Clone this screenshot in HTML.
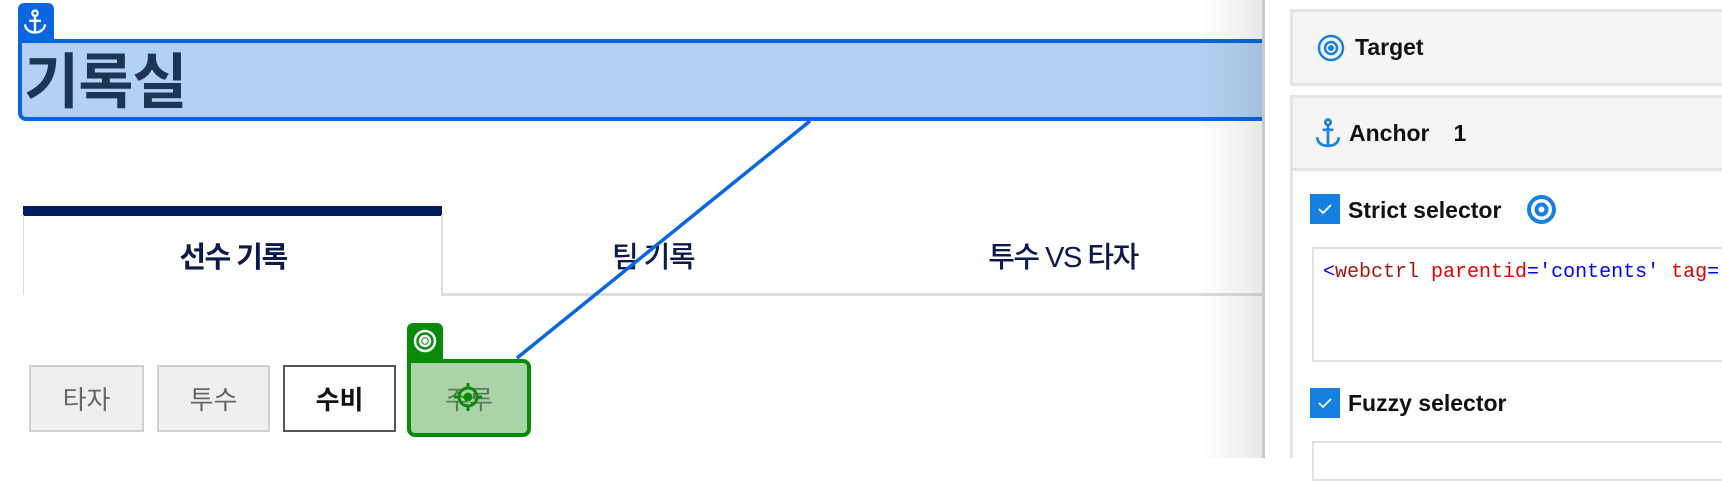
<!DOCTYPE html>
<html><head><meta charset="utf-8"><style>
*{margin:0;padding:0;box-sizing:border-box}
body{width:1722px;height:458px;overflow:hidden;background:#fff;position:relative;font-family:"Liberation Sans","Noto Sans CJK KR",sans-serif}
.a{position:absolute}
.btn{position:absolute;top:365px;height:67px;border:2px solid #d0d0d0;background:#efefef;color:#666;font-size:26px;display:flex;align-items:center;justify-content:center}
.tab{position:absolute;top:215px;height:79px;display:flex;align-items:center;justify-content:center;font-size:29px;font-weight:bold;color:#0a1a4a;letter-spacing:-1.5px}
.hdr{position:absolute;left:1290px;width:440px;background:#f4f5f4;border:3px solid #e4e5e4;border-right:none;display:flex;align-items:center;font-size:23px;font-weight:bold;color:#111}
.cb{position:absolute;left:1310px;width:30px;height:30px;background:#1580e0}
</style></head><body>
<div class="a" style="left:18px;top:3px;width:36px;height:40px;background:#0a66e0;border-radius:6px 6px 0 0"></div>
<svg class="a" style="left:21px;top:8px" width="28" height="28" viewBox="0 0 24 24" fill="none" stroke="#fff" stroke-width="2"><circle cx="12" cy="4.5" r="2.3"/><path d="M12 7v14M7 11h10M3.5 14c0 4 4 7 8.5 7s8.5-3 8.5-7"/></svg>
<div class="a" style="left:18px;top:39px;width:1300px;height:82px;background:#b3d1f3;border:4px solid #0a66e0;border-radius:0 0 0 8px"></div>
<div class="a" style="left:24px;top:42px;font-size:60px;font-weight:bold;color:#1c3557;letter-spacing:-1px;line-height:82px">기록실</div>
<div class="a" style="left:23px;top:206px;width:419px;height:10px;background:#001e60"></div>
<div class="a" style="left:23px;top:215px;width:1px;height:80px;background:#ddd"></div>
<div class="a" style="left:441px;top:215px;width:2px;height:80px;background:#ddd"></div>
<div class="a" style="left:441px;top:293px;width:850px;height:3px;background:#ddd"></div>
<div class="tab" style="left:24px;width:418px">선수 기록</div>
<div class="tab" style="left:443px;width:420px;font-weight:500">팀 기록</div>
<div class="tab" style="left:863px;width:400px;font-weight:500">투수 VS 타자</div>
<div class="btn" style="left:29px;width:115px">타자</div>
<div class="btn" style="left:157px;width:113px">투수</div>
<div class="btn" style="left:283px;width:113px;background:#fff;border-color:#555;color:#111;font-weight:bold">수비</div>
<div class="a" style="left:407px;top:323px;width:36px;height:40px;background:#0a8a0a;border-radius:6px 6px 0 0"></div>
<svg class="a" style="left:412px;top:328px" width="26" height="26" viewBox="0 0 26 26" fill="none" stroke="#fff" stroke-width="2.5"><circle cx="13" cy="13" r="10"/><circle cx="13" cy="13" r="5"/><circle cx="13" cy="13" r="1.5" fill="#fff"/></svg>
<div class="a" style="left:407px;top:359px;width:124px;height:78px;background:#aad3a8;border:4px solid #0a8a0a;border-radius:0 8px 8px 8px;display:flex;align-items:center;justify-content:center;font-size:26px;color:#5a7a5a">주루</div>
<svg class="a" style="left:452px;top:381px" width="32" height="32" viewBox="0 0 32 32" fill="none" stroke="#0a8a0a" stroke-width="3"><circle cx="16" cy="16" r="9"/><circle cx="16" cy="16" r="3" fill="#0a8a0a"/><path d="M16 2v6M16 24v6M2 16h6M24 16h6"/></svg>
<svg class="a" style="left:0;top:0" width="1300" height="458"><line x1="810" y1="121" x2="517" y2="358" stroke="#0a66e0" stroke-width="3.5"/></svg>
<div class="a" style="left:1200px;top:0;width:65px;height:458px;background:linear-gradient(to right,rgba(0,0,0,0),rgba(0,0,0,.09))"></div>
<div class="a" style="left:1262px;top:0;width:460px;height:458px;background:#fff;border-left:3px solid #c9c9cc"></div>
<div class="hdr" style="top:9px;height:77px;padding-left:24px"><svg width="28" height="28" viewBox="0 0 28 28" fill="none" stroke="#1a80e0" stroke-width="2.5"><circle cx="14" cy="14" r="12"/><circle cx="14" cy="14" r="6"/><circle cx="14" cy="14" r="1.8" fill="#1a80e0"/></svg><span style="margin-left:10px">Target</span></div>
<div class="hdr" style="top:95px;height:76px;padding-left:22px"><svg width="26" height="30" viewBox="0 0 24 28" fill="none" stroke="#1a80e0" stroke-width="2.5"><circle cx="12" cy="4" r="2.5"/><path d="M12 7v19M7 11h10M2 18c0 5 4 8 10 8s10-3 10-8"/></svg><span style="margin-left:8px">Anchor</span><span style="margin-left:24px">1</span></div>
<div class="a" style="left:1290px;top:170px;width:3px;height:288px;background:#e4e5e4"></div>
<div class="cb" style="top:194px"><svg width="30" height="30" viewBox="0 0 30 30" fill="none" stroke="#fff" stroke-width="1.8"><path d="M9 15l4 4 8-8"/></svg></div>
<div class="a" style="left:1348px;top:195px;font-size:23px;font-weight:bold;color:#111;line-height:30px">Strict selector</div>
<svg class="a" style="left:1526px;top:194px" width="31" height="31" viewBox="0 0 31 31" fill="none" stroke="#1a80e0" stroke-width="4"><circle cx="15.5" cy="15.5" r="12.5"/><circle cx="15.5" cy="15.5" r="5"/></svg>
<div class="a" style="left:1312px;top:247px;width:420px;height:115px;border:2px solid #e2e2e2"></div>
<div class="a" style="left:1323px;top:259px;font-family:'Liberation Mono',monospace;font-size:20px;line-height:28px;white-space:nowrap;color:#a31515"><span style="color:#00f">&lt;</span>webctrl <span style="color:#e50000">parentid</span><span style="color:#00f">=</span><span style="color:#00f">'contents'</span> <span style="color:#e50000">tag</span><span style="color:#00f">=</span></div>
<div class="cb" style="top:388px"><svg width="30" height="30" viewBox="0 0 30 30" fill="none" stroke="#fff" stroke-width="1.8"><path d="M9 15l4 4 8-8"/></svg></div>
<div class="a" style="left:1348px;top:388px;font-size:23px;font-weight:bold;color:#111;line-height:30px">Fuzzy selector</div>
<div class="a" style="left:1312px;top:441px;width:420px;height:40px;border:2px solid #e2e2e2"></div>
</body></html>
